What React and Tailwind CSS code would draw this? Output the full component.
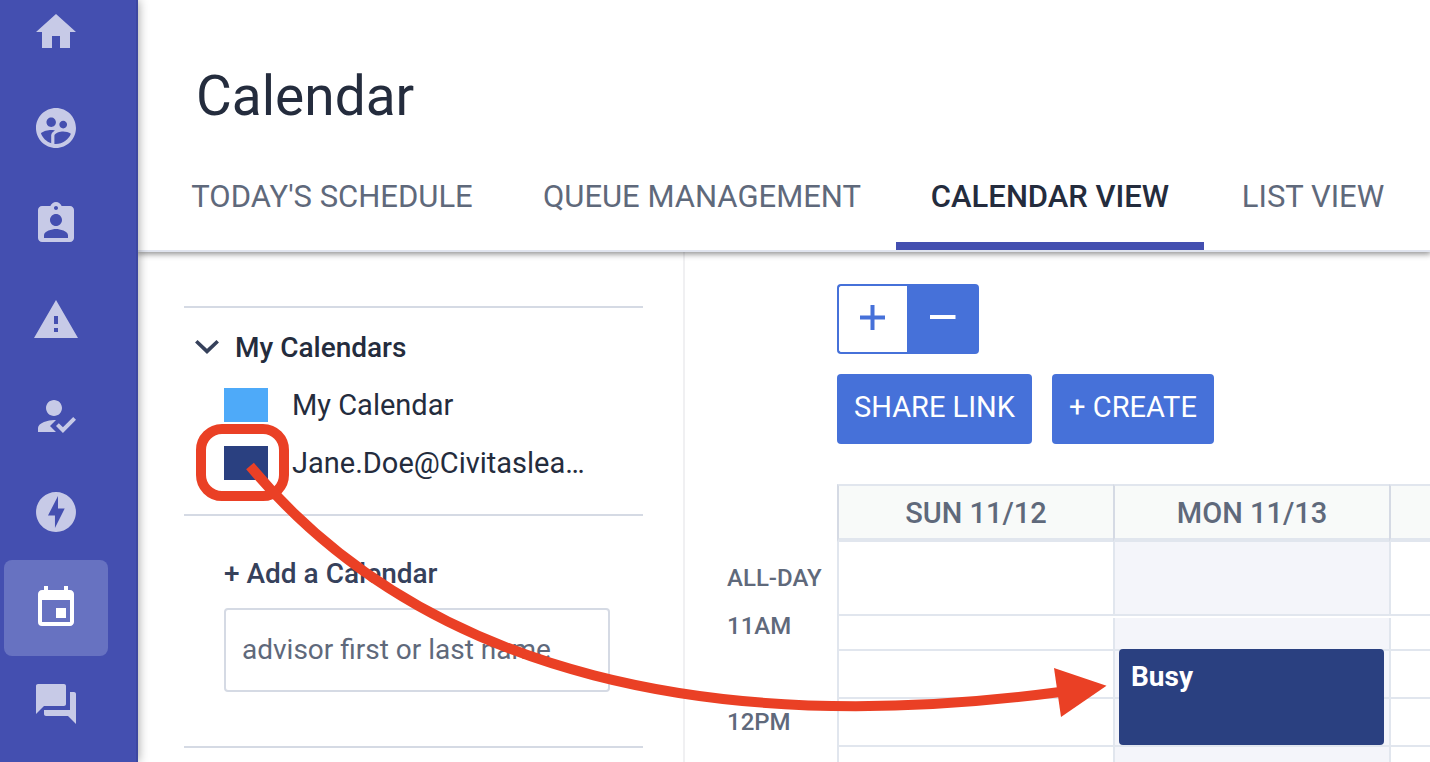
import {
  MdHome,
  MdSupervisedUserCircle,
  MdAssignmentInd,
  MdWarning,
  MdHowToReg,
  MdOfflineBolt,
  MdEvent,
  MdForum,
} from "react-icons/md";

const navItems = [
  { label: "Home", Icon: MdHome },
  { label: "Students", Icon: MdSupervisedUserCircle },
  { label: "Assignments", Icon: MdAssignmentInd },
  { label: "Alerts", Icon: MdWarning },
  { label: "Check in", Icon: MdHowToReg },
  { label: "Quick actions", Icon: MdOfflineBolt },
  { label: "Calendar", Icon: MdEvent, active: true },
  { label: "Messages", Icon: MdForum },
];

const tabs = [
  { label: "TODAY'S SCHEDULE", width: "w-[352px]" },
  { label: "QUEUE MANAGEMENT", width: "w-[388px]" },
  { label: "CALENDAR VIEW", width: "w-[308px]", active: true },
  { label: "LIST VIEW", width: "w-[218px]" },
];

const calendars = [
  { id: "mine", name: "My Calendar", color: "bg-[#4eaaf9]" },
  { id: "jane", name: "Jane.Doe@Civitaslea…", color: "bg-[#2a4080]", marked: true },
];

const slots = [
  { label: "11AM", height: "h-[33px]", align: "align-top" },
  { label: "", height: "h-12", align: "align-middle", event: "Busy" },
  { label: "12PM", height: "h-12", align: "align-middle" },
  { label: "", height: "h-12", align: "align-middle" },
];

function Sidebar() {
  return (
    <aside className="relative z-20 w-[138px] shrink-0 border-r-2 border-[#3d47a0] bg-[#444fb0] shadow-[0_0_10px_rgba(0,0,0,0.4)]">
      <nav className="-mt-4 flex flex-col pl-1" aria-label="Main">
        {navItems.map(({ label, Icon, active }) => (
          <a
            key={label}
            href="#"
            aria-label={label}
            className={
              active
                ? "flex h-24 w-[104px] items-center justify-center rounded-lg bg-[#6772c1] text-white"
                : "flex h-24 w-[104px] items-center justify-center text-[#c7cae7]"
            }
          >
            <Icon className="size-12" />
          </a>
        ))}
      </nav>
    </aside>
  );
}

function Header() {
  return (
    <header className="relative z-10 shrink-0 border-b-2 border-[#e0e4ee] bg-white shadow-[0_1px_6px_1px_rgba(0,0,0,0.45)]">
      <h1 className="pt-16 pl-[58px] text-[55px] leading-16 text-[#242c3d]">Calendar</h1>
      <nav className="mt-4 flex pl-[18px]" aria-label="Calendar sections">
        {tabs.map((tab) => (
          <a
            key={tab.label}
            href="#"
            className={`${tab.width} flex h-[106px] shrink-0 items-center justify-center border-b-8 pt-2 text-[31px] whitespace-nowrap ${
              tab.active
                ? "border-[#444fb0] font-medium text-[#242c3d]"
                : "border-transparent text-[#5f697b]"
            }`}
          >
            {tab.label}
          </a>
        ))}
      </nav>
    </header>
  );
}

function CalendarPanel() {
  return (
    <section className="w-[547px] shrink-0 border-r-2 border-[#f0f0f2] pt-[54px] pr-10 pl-[46px]">
      <div className="border-y-2 border-[#d5dae4] pt-[10px] pb-[22px]">
        <button type="button" className="flex h-[58px] items-center pt-[2px] pl-[11px] text-[28px] font-medium text-[#242c3d]">
          <svg className="mr-4 h-6 w-6" viewBox="0 0 24 24" fill="none" stroke="#36415b" strokeWidth="3.6">
            <path d="M1.300 5.200 12 15.400 22.700 5.200" />
          </svg>
          My Calendars
        </button>
        <ul>
          {calendars.map((c) => (
            <li key={c.id} className="flex h-[58px] items-center pl-10">
              <span className="relative flex">
                <input
                  id={c.id}
                  type="checkbox"
                  defaultChecked
                  className={`${c.color} h-[34px] w-11 appearance-none`}
                />
                {c.marked && (
                  <span className="pointer-events-none absolute -top-[22px] -left-7 h-[77px] w-[93px] rounded-[26px] border-10 border-[#ea4025]" />
                )}
              </span>
              <label htmlFor={c.id} className="pt-[2px] pl-6 text-[29px] whitespace-nowrap text-[#242c3d]">
                {c.name}
              </label>
            </li>
          ))}
        </ul>
      </div>
      <div className="h-[232px] border-b-2 border-[#d5dae4] pt-9 pr-[33px] pl-10">
        <label htmlFor="advisor" className="block pt-[2px] text-[28px] leading-10 font-medium text-[#36415b]">
          + Add a Calendar
        </label>
        <input
          id="advisor"
          type="text"
          placeholder="advisor first or last name"
          className="mt-[14px] h-[84px] w-full rounded border-2 border-[#d5dae4] px-4 pb-[2px] text-[28px] placeholder:text-[#5f697b]"
        />
      </div>
    </section>
  );
}

function Toolbar() {
  return (
    <div className="flex flex-col gap-5 pl-[152px]">
      <div className="flex">
        <button
          type="button"
          aria-label="Zoom in"
          className="flex h-[70px] w-[70px] items-center justify-center rounded-l border-2 border-r-0 border-[#4671d9] text-[#4671d9]"
        >
          <svg className="h-7 w-7" viewBox="0 0 28 28" stroke="currentColor" strokeWidth="4">
            <path d="M1 12.500H26M13.500 0V25" />
          </svg>
        </button>
        <button
          type="button"
          aria-label="Zoom out"
          className="flex h-[70px] w-[72px] items-center justify-center rounded-r bg-[#4671d9] text-white"
        >
          <svg className="h-7 w-7" viewBox="0 0 28 28" stroke="currentColor" strokeWidth="4">
            <path d="M1 12H26.500" />
          </svg>
        </button>
      </div>
      <div className="flex gap-5 text-[29px] text-white">
        <button type="button" className="h-[70px] w-[195px] rounded bg-[#4671d9] pb-[2px] whitespace-nowrap">
          SHARE LINK
        </button>
        <button type="button" className="h-[70px] w-[162px] rounded bg-[#4671d9] pb-[2px] whitespace-nowrap">
          + CREATE
        </button>
      </div>
    </div>
  );
}

function WeekGrid() {
  const head =
    "h-[58px] border-t-2 border-b-4 border-l-2 border-t-[#e1e6ee] border-b-[#e1e6ee] border-l-[#d5dae4] bg-[#f8faf9] p-0 pt-1 font-medium";
  const cell = "border-b-2 border-l-2 border-[#e1e6ee] p-0";
  const rowLabel = "p-0 pb-[2px] pl-[42px] text-left text-2xl leading-4 font-medium";
  return (
    <table className="mt-10 w-full table-fixed border-separate border-spacing-0 text-[#5f697b]">
      <colgroup>
        <col className="w-[152px]" />
        <col className="w-[276px]" />
        <col className="w-[276px]" />
        <col />
      </colgroup>
      <thead>
        <tr className="text-[29px]">
          <td />
          <th className={head}>SUN 11/12</th>
          <th className={head}>MON 11/13</th>
          <td className={head} />
        </tr>
      </thead>
      <tbody>
        <tr className="h-[74px]">
          <th className={rowLabel}>ALL-DAY</th>
          <td className={cell} />
          <td className={`${cell} bg-[#f4f5fa]`} />
          <td className={cell} />
        </tr>
        <tr className="h-[2px]">
          <td className="p-0" />
          <td className="border-l-2 border-[#e1e6ee] p-0" />
          <td className="p-0" />
          <td className="p-0" />
        </tr>
        {slots.map((slot, i) => (
          <tr key={i} className={slot.height}>
            <th className={`${rowLabel} ${slot.align}`}>{slot.label}</th>
            <td className={cell} />
            <td className={`${cell} relative bg-[#f4f5fa]`}>
              {slot.event && (
                <div className="absolute -top-[2px] right-[5px] left-1 z-10 h-24 rounded bg-[#2a4080] px-3 py-2 text-[28px] leading-10 font-bold text-white">
                  {slot.event}
                </div>
              )}
            </td>
            <td className={cell} />
          </tr>
        ))}
      </tbody>
    </table>
  );
}

function Arrow() {
  return (
    <svg
      className="pointer-events-none absolute top-0 left-0 z-30 h-[762px] w-[1430px]"
      viewBox="0 0 1430 762"
      aria-hidden="true"
    >
      <path d="M250 466C427 678 720 737 1060 692" fill="none" stroke="#ea4025" strokeWidth="10" />
      <path d="M1054 668 1106.500 685.700 1061 717Z" fill="#ea4025" />
    </svg>
  );
}

export default function App() {
  return (
    <div className="relative flex h-screen overflow-hidden bg-white font-['Roboto',sans-serif]">
      <Sidebar />
      <div className="flex min-w-0 flex-1 flex-col">
        <Header />
        <main className="flex flex-1">
          <CalendarPanel />
          <section className="min-w-0 flex-1 pt-8">
            <Toolbar />
            <WeekGrid />
          </section>
        </main>
      </div>
      <Arrow />
    </div>
  );
}
